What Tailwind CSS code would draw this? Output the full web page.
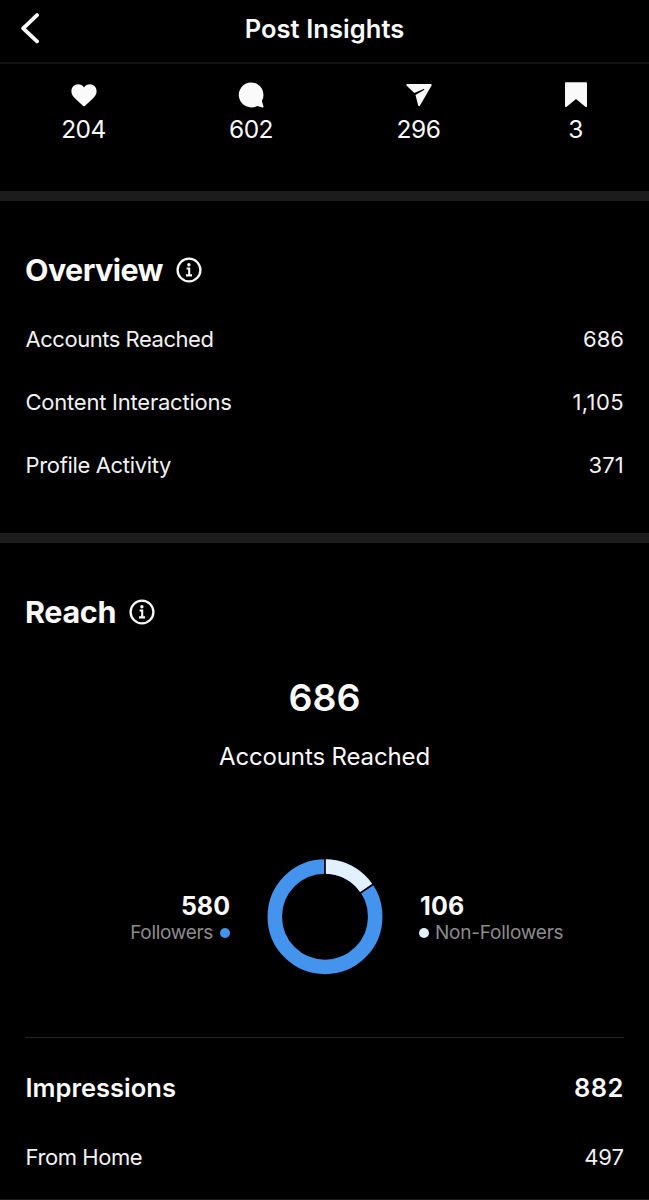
<!DOCTYPE html>
<html lang="en">
<head>
<meta charset="utf-8">
<title>Post Insights</title>
<script src="https://cdn.jsdelivr.net/npm/@tailwindcss/browser@4"></script>
</head>
<body class="bg-black">
<main class="flex h-[1200px] w-[649px] flex-col overflow-hidden border-b border-[#1c1c1c] bg-black font-[Inter,sans-serif] text-[#fafafa]">
  <header class="grid h-[64px] shrink-0 grid-cols-[60px_1fr_60px] border-b-2 border-[#121212]">
    <button class="flex pt-[13px] pl-[20px]" aria-label="Back">
      <svg class="h-[31px] w-[19px]" viewBox="0 0 19 31" fill="none" stroke="#fafafa" stroke-width="3.9" stroke-linecap="round" stroke-linejoin="round"><path d="M17 2.100 3.200 15.300 17 28.300"/></svg>
    </button>
    <h1 class="text-center text-[25.500px] leading-[57px] font-semibold tracking-[0.06px]"><span>Post Insights</span></h1>
  </header>

  <section class="grid h-[127px] shrink-0 grid-cols-[167px_168px_167px_147px] pt-[18px] text-center text-[24.500px] leading-[31px] tracking-[-0.5px]">
    <div class="flex flex-col items-center gap-[6px]">
      <svg class="h-[26px] w-[26px]" viewBox="0 0 26 26" fill="#fafafa"><path d="M13 24.200c-.6 0-1-.4-1.600-.9L4.100 16.600C1.700 14.200.4 12 .4 9.200.4 5.200 3.300 2.200 7 2.200c2.500 0 4.700 1.100 6 3.200 1.300-2.100 3.500-3.200 6-3.200 3.700 0 6.600 3 6.600 7 0 2.800-1.300 5-3.700 7.400l-7.300 6.700c-.6.5-1 .9-1.600.9z"/></svg>
      <span>204</span>
    </div>
    <div class="flex flex-col items-center gap-[6px]">
      <svg class="h-[26px] w-[26px]" viewBox="0 0 26 26" fill="#fafafa"><path d="M13 .4a12.500 12.500 0 1 0 6.200 23.500l5.300 1.500c.7.200 1.200-.3 1-1l-1.600-5.400A12.500 12.500 0 0 0 13 .4z"/></svg>
      <span>602</span>
    </div>
    <div class="flex flex-col items-center gap-[6px]">
      <svg class="h-[26px] w-[26px]" viewBox="0 0 26 26" fill="#fafafa"><path d="M1.200 2.100H24.800c.8 0 1.200.8.800 1.500L14 23.600c-.5.900-1.700.700-1.900-.3L9.500 13 18 7.900c.6-.4.300-1-.3-.8L8.300 11.100.7 3.700c-.6-.6-.3-1.600.5-1.600z"/></svg>
      <span>296</span>
    </div>
    <div class="flex flex-col items-center gap-[6px]">
      <svg class="h-[26px] w-[26px]" viewBox="0 0 26 26" fill="#fafafa"><path d="M3 .3h20c.6 0 1 .4 1 1v22.700c0 1-1 1.300-1.700.7L13 16.900l-9.300 7.800C3 25.300 2 25 2 24V1.300c0-.6.400-1 1-1z"/></svg>
      <span>3</span>
    </div>
  </section>

  <div class="h-[10px] shrink-0 bg-[#1c1c1c]"></div>

  <section class="h-[332px] shrink-0 px-[25px] pt-[49px]">
    <div class="flex h-[40px] items-center gap-[13px]">
      <h2 class="text-[30.500px] leading-[40px] font-bold tracking-[-0.58px]"><span>Overview</span></h2>
      <svg class="h-[26px] w-[26px]" viewBox="0 0 26 26" fill="none" stroke="#fafafa" stroke-width="2.300"><circle cx="13" cy="13" r="11.400"/><path d="M10.600 11.500H13.200V18.300M10 18.400H16" stroke-width="2.100"/><circle cx="12.900" cy="7.700" r="1.700" fill="#fafafa" stroke="none"/></svg>
    </div>
    <dl class="mt-[18px] text-[22px] leading-[63px] text-[#f2f2f2]">
      <div class="flex justify-between"><dt class="pl-[0.500px] tracking-[-0.47px]"><span>Accounts Reached</span></dt><dd><span>686</span></dd></div>
      <div class="flex justify-between"><dt class="pl-[0.500px] tracking-[-0.23px]"><span>Content Interactions</span></dt><dd class="tracking-[0.4px]"><span>1,105</span></dd></div>
      <div class="flex justify-between"><dt class="pl-[0.500px] tracking-[-0.34px]"><span>Profile Activity</span></dt><dd class="tracking-[0.2px]"><span>371</span></dd></div>
    </dl>
  </section>

  <div class="h-[10px] shrink-0 bg-[#1c1c1c]"></div>

  <section class="shrink-0 px-[25px] pt-[49px]">
    <div class="flex h-[40px] items-center gap-[13px]">
      <h2 class="text-[30.500px] leading-[40px] font-bold tracking-[-0.35px]"><span>Reach</span></h2>
      <svg class="h-[26px] w-[26px]" viewBox="0 0 26 26" fill="none" stroke="#fafafa" stroke-width="2.300"><circle cx="13" cy="13" r="11.400"/><path d="M10.600 11.500H13.200V18.300M10 18.400H16" stroke-width="2.100"/><circle cx="12.900" cy="7.700" r="1.700" fill="#fafafa" stroke="none"/></svg>
    </div>
    <div class="flex flex-col items-center pt-[41px]">
      <p class="text-[37.500px] leading-[50px] font-semibold"><span>686</span></p>
      <p class="mt-[14px] text-[24px] leading-[40px] tracking-[-0.13px]"><span>Accounts Reached</span></p>
    </div>
    <div class="mt-[80px] grid h-[120px] grid-cols-[205px_190px_1fr]">
      <div class="flex flex-col items-end pt-[34px]">
        <p class="text-[25px] leading-[30px] font-bold"><span>580</span></p>
        <p class="flex items-center gap-[7px] text-[19px] leading-[24px] tracking-[-0.3px] text-[#8c8c8c]"><span>Followers</span><i class="size-[10px] rounded-full bg-[#4493ed]"></i></p>
      </div>
      <div class="flex justify-center">
        <svg class="h-[120px] w-[120px]" viewBox="0 0 120 120" fill="none" stroke-width="14.500">
          <circle cx="60" cy="59.700" r="50.200" stroke="#4493ed"/>
          <path d="M60 9.500A50.200 50.200 0 0 1 101.700 31.700" stroke="#e3f0fd"/>
          <path d="M60 0V20M93.500 37.200 110 26" stroke="#000" stroke-width="1.700"/>
        </svg>
      </div>
      <div class="-ml-px flex flex-col pt-[34px]">
        <p class="pl-px text-[25px] leading-[30px] font-bold tracking-[0.2px]"><span>106</span></p>
        <p class="flex items-center gap-[6px] text-[19px] leading-[24px] tracking-[-0.22px] text-[#8c8c8c]"><i class="size-[10px] rounded-full bg-[#e3f0fd]"></i><span>Non-Followers</span></p>
      </div>
    </div>
    <div class="mt-[60px] border-t border-[#242424] pt-[25px]">
      <div class="flex justify-between text-[25.500px] leading-[50px] font-semibold"><h3 class="pl-[0.500px]"><span>Impressions</span></h3><span class="tracking-[0.5px]">882</span></div>
      <div class="mt-[19px] flex justify-between text-[22px] leading-[50px] text-[#f2f2f2]"><span class="pl-[0.500px] tracking-[-0.43px]">From Home</span><span>497</span></div>
    </div>
  </section>
</main>
</body>
</html>
